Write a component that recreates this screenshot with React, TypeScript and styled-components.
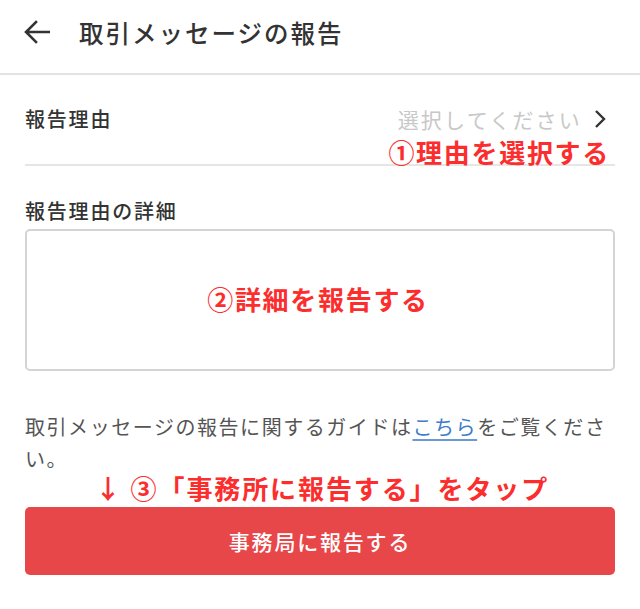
import React from "react";
import styled, { createGlobalStyle } from "styled-components";

const Global = createGlobalStyle`
  html, body { margin: 0; padding: 0; background: #fff; }
  body { font-family: "Noto Sans CJK JP", "Noto Sans", sans-serif; color: #333; }
  * { box-sizing: border-box; }
`;

const Page = styled.div`
  width: 640px;
  height: 609px;
  background: #fff;
  display: flex;
  flex-direction: column;
  overflow: hidden;
`;

const Header = styled.header`
  height: 75px;
  display: flex;
  align-items: center;
  padding: 0 0 9px 24px;
  gap: 29px;
  border-bottom: 2px solid #e3e3e3;
`;

const Title = styled.h1`
  margin: 0;
  font-size: 24.5px;
  font-weight: 500;
  letter-spacing: 2px;
  color: #333;
`;

const Body = styled.main`
  padding: 0 25px;
  display: flex;
  flex-direction: column;
`;

const ReasonRow = styled.div`
  position: relative;
  height: 91px;
  display: flex;
  align-items: flex-start;
  justify-content: space-between;
  padding-top: 29px;
  padding-right: 9px;
  border-bottom: 2px solid #e6e6e6;
`;

const Label = styled.div`
  font-size: 20px;
  font-weight: 500;
  letter-spacing: 1.8px;
  color: #333;
  line-height: 30px;
`;

const Select = styled.div`
  display: flex;
  align-items: center;
  gap: 12px;
  font-size: 21px;
  letter-spacing: 2.2px;
  color: #c8c8c8;
  line-height: 30px;
`;

const Note = styled.div`
  color: #fb2d2d;
  font-weight: 700;
  font-size: 26px;
  letter-spacing: 1.7px;
  line-height: 30px;
  white-space: nowrap;
`;

const NoteOverlay = styled(Note)`
  position: absolute;
  right: 5px;
  top: 62px;
`;

const DetailLabel = styled(Label)`
  margin-top: 30px;
`;

const TextBox = styled.div`
  margin-top: 3px;
  height: 142px;
  border: 2px solid #d4d4d4;
  border-radius: 5px;
  display: flex;
  align-items: center;
  justify-content: center;
  padding: 0 4px 2px 0;
`;

const Guide = styled.p`
  margin: 40px 0 0;
  font-size: 20px;
  letter-spacing: 1.55px;
  line-height: 32px;
  color: #555;
`;

const Link = styled.a`
  color: #3c7cc9;
  text-decoration: underline;
  text-decoration-color: #6a9ad6;
  text-underline-offset: 4px;
`;

const TapNote = styled(Note)`
  margin-top: 0;
  line-height: 26px;
  text-align: center;
  padding-left: 4px;
  letter-spacing: 1.9px;
`;

const Button = styled.button`
  margin-top: 6px;
  height: 68px;
  width: 100%;
  border: none;
  border-radius: 5px;
  background: #e8474a;
  color: #fff;
  font-family: inherit;
  font-size: 21px;
  font-weight: 500;
  letter-spacing: 1.8px;
  padding-bottom: 2px;
`;

const Back = () => (
  <svg width="26" height="24" viewBox="0 0 26 24" fill="none">
    <path d="M25 12H3M12 2L2 12l10 10" stroke="#333" strokeWidth="2.6" strokeLinecap="square" />
  </svg>
);

const Chevron = () => (
  <svg width="12" height="20" viewBox="0 0 12 20" fill="none">
    <path d="M2 2l8 8-8 8" stroke="#333" strokeWidth="2.4" />
  </svg>
);

export default function App() {
  return (
    <Page>
      <Global />
      <Header>
        <Back />
        <Title>取引メッセージの報告</Title>
      </Header>
      <Body>
        <ReasonRow>
          <Label>報告理由</Label>
          <Select>
            選択してください
            <Chevron />
          </Select>
          <NoteOverlay>①理由を選択する</NoteOverlay>
        </ReasonRow>
        <DetailLabel>報告理由の詳細</DetailLabel>
        <TextBox>
          <Note>②詳細を報告する</Note>
        </TextBox>
        <Guide>
          取引メッセージの報告に関するガイドは<Link>こちら</Link>をご覧ください。
        </Guide>
        <TapNote>↓ ③「事務所に報告する」をタップ</TapNote>
        <Button>事務局に報告する</Button>
      </Body>
    </Page>
  );
}
